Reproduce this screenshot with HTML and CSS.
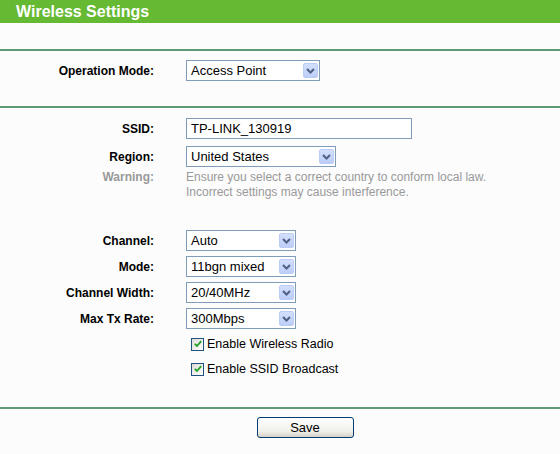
FILE: index.html
```html
<!DOCTYPE html>
<html>
<head>
<meta charset="utf-8">
<title>Wireless Settings</title>
<link rel="stylesheet" href="styles.css">
</head>
<body>
<div class="header">Wireless Settings</div>
<div class="rule rule-top"></div>

<div class="grid sec-mode">
  <div class="label">Operation Mode:</div>
  <div class="field">
    <span class="sel w134"><select><option>Access Point</option></select><span class="btn"><svg viewBox="0 0 9 6" width="9" height="6"><path d="M1 1 L4.5 4.5 L8 1" fill="none" stroke="#4d6185" stroke-width="2"/></svg></span></span>
  </div>
</div>

<div class="rule rule-mid"></div>

<div class="grid sec-ssid">
  <div class="label">SSID:</div>
  <div class="field"><input class="txt" type="text" value="TP-LINK_130919"></div>
  <div class="label">Region:</div>
  <div class="field">
    <span class="sel w150"><select><option>United States</option></select><span class="btn"><svg viewBox="0 0 9 6" width="9" height="6"><path d="M1 1 L4.5 4.5 L8 1" fill="none" stroke="#4d6185" stroke-width="2"/></svg></span></span>
  </div>
  <div class="label warn-label">Warning:</div>
  <div class="field warn">Ensure you select a correct country to conform local law.<br>Incorrect settings may cause interference.</div>
</div>

<div class="grid sec-chan">
  <div class="label">Channel:</div>
  <div class="field">
    <span class="sel w110"><select><option>Auto</option></select><span class="btn"><svg viewBox="0 0 9 6" width="9" height="6"><path d="M1 1 L4.5 4.5 L8 1" fill="none" stroke="#4d6185" stroke-width="2"/></svg></span></span>
  </div>
  <div class="label">Mode:</div>
  <div class="field">
    <span class="sel w110"><select><option>11bgn mixed</option></select><span class="btn"><svg viewBox="0 0 9 6" width="9" height="6"><path d="M1 1 L4.5 4.5 L8 1" fill="none" stroke="#4d6185" stroke-width="2"/></svg></span></span>
  </div>
  <div class="label">Channel Width:</div>
  <div class="field">
    <span class="sel w110"><select><option>20/40MHz</option></select><span class="btn"><svg viewBox="0 0 9 6" width="9" height="6"><path d="M1 1 L4.5 4.5 L8 1" fill="none" stroke="#4d6185" stroke-width="2"/></svg></span></span>
  </div>
  <div class="label">Max Tx Rate:</div>
  <div class="field">
    <span class="sel w110"><select><option>300Mbps</option></select><span class="btn"><svg viewBox="0 0 9 6" width="9" height="6"><path d="M1 1 L4.5 4.5 L8 1" fill="none" stroke="#4d6185" stroke-width="2"/></svg></span></span>
  </div>
  <div class="label"></div>
  <div class="field check-row">
    <span class="cb"><svg viewBox="0 0 8 8" width="8" height="8"><path d="M0.8 3.8 L3 6 L7.2 1.2" fill="none" stroke="#21a121" stroke-width="1.8"/></svg></span><span>Enable Wireless Radio</span>
  </div>
  <div class="label"></div>
  <div class="field check-row">
    <span class="cb"><svg viewBox="0 0 8 8" width="8" height="8"><path d="M0.8 3.8 L3 6 L7.2 1.2" fill="none" stroke="#21a121" stroke-width="1.8"/></svg></span><span>Enable SSID Broadcast</span>
  </div>
</div>

<div class="rule rule-bottom"></div>
<div class="actions"><button class="save" type="button">Save</button></div>
</body>
</html>
```

FILE: styles.css
```css
html, body {
  margin: 0;
  padding: 0;
  background: #fcfcfc;
  font-family: "Liberation Sans", Arial, sans-serif;
  color: #000;
}

.header {
  height: 23px;
  line-height: 23px;
  background: #66b932;
  color: #fff;
  font-weight: bold;
  font-size: 16px;
  padding-left: 16px;
}

.rule {
  height: 2px;
  background: #5c9b78;
}
.rule-top { margin-top: 26px; }
.rule-mid { margin-top: 25px; }
.rule-bottom { margin-top: 28px; }

.grid {
  display: grid;
  grid-template-columns: 154px 1fr;
  column-gap: 32px;
  align-items: center;
}

.sec-mode { margin-top: 9px; }
.sec-ssid { margin-top: 10px; row-gap: 7px; }
.sec-chan { margin-top: 14px; row-gap: 5px; }

.label {
  text-align: right;
  font-weight: bold;
  font-size: 12px;
}
.warn-label { color: #999; align-self: start; line-height: 15px; margin-top: -4px; }

.field { display: flex; align-items: center; font-size: 12.5px; }

.warn {
  display: block;
  color: #999;
  font-size: 12px;
  line-height: 15px;
  margin-top: -4px;
  margin-bottom: 16px;
}

.sel {
  display: inline-flex;
  align-items: center;
  height: 21px;
  box-sizing: border-box;
  border: 1px solid #7f9db9;
  background: #fff;
  padding-right: 1px;
}
.sel select {
  appearance: none;
  -webkit-appearance: none;
  border: 0;
  outline: 0;
  background: transparent;
  font-family: "Liberation Sans", Arial, sans-serif;
  font-size: 13px;
  color: #000;
  padding: 0 0 0 4px;
  margin: 0;
  flex: 1;
  min-width: 0;
  height: 19px;
}
.sel .btn {
  width: 15px;
  height: 15px;
  box-sizing: border-box;
  border: 1px solid #bccdf5;
  border-radius: 2px;
  background: linear-gradient(#d4dffc, #bccdf9);
  display: flex;
  align-items: center;
  justify-content: center;
}
.w134 { width: 134px; }
.w150 { width: 150px; }
.w110 { width: 110px; }

.txt {
  width: 226px;
  height: 21px;
  box-sizing: border-box;
  border: 1px solid #7f9db9;
  background: #fff;
  font-family: "Liberation Sans", Arial, sans-serif;
  font-size: 13px;
  padding: 0 4px;
  margin: 0;
  outline: 0;
}

.check-row {
  height: 20px;
  padding-left: 5px;
  gap: 3px;
}
.cb {
  width: 13px;
  height: 13px;
  box-sizing: border-box;
  border: 1px solid #1c5180;
  background: linear-gradient(135deg, #dcdcd7, #fff);
  display: flex;
  align-items: center;
  justify-content: center;
}

.actions {
  display: flex;
  justify-content: center;
  padding-top: 8px;
  padding-left: 50px;
}
.save {
  width: 97px;
  height: 21px;
  border: 1px solid #003c74;
  border-radius: 3px;
  background: linear-gradient(#ffffff, #f0f0ea 70%, #d6d0c5);
  font-family: "Liberation Sans", Arial, sans-serif;
  font-size: 13px;
  color: #000;
  padding: 0;
}
```
